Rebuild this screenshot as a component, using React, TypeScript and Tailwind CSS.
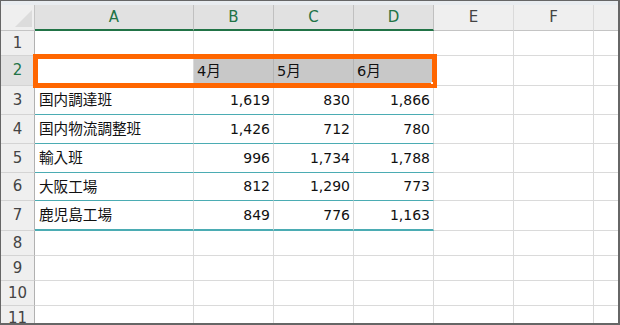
import React from "react";

type Col = { key: string; w: string; data: boolean };

const cols: Col[] = [
  { key: "A", w: "w-[159px]", data: true },
  { key: "B", w: "w-[80px]", data: true },
  { key: "C", w: "w-[80px]", data: true },
  { key: "D", w: "w-[80px]", data: true },
  { key: "E", w: "w-[80px]", data: false },
  { key: "F", w: "w-[80px]", data: false },
  { key: "", w: "w-[24px]", data: false },
];

type Row = { n: number; h: string; cells?: string[] };

const rows: Row[] = [
  { n: 1, h: "h-[25px]" },
  { n: 2, h: "h-[30px]", cells: ["", "4月", "5月", "6月"] },
  { n: 3, h: "h-[29px]", cells: ["国内調達班", "1,619", "830", "1,866"] },
  { n: 4, h: "h-[29px]", cells: ["国内物流調整班", "1,426", "712", "780"] },
  { n: 5, h: "h-[29px]", cells: ["輸入班", "996", "1,734", "1,788"] },
  { n: 6, h: "h-[28px]", cells: ["大阪工場", "812", "1,290", "773"] },
  { n: 7, h: "h-[30px]", cells: ["鹿児島工場", "849", "776", "1,163"] },
  { n: 8, h: "h-[25px]" },
  { n: 9, h: "h-[25px]" },
  { n: 10, h: "h-[25px]" },
  { n: 11, h: "h-[25px]" },
];

const font = "font-['DejaVu_Sans','Noto_Sans_CJK_JP',sans-serif]";

function cellClass(row: Row, ci: number, col: Col) {
  const isTable = row.n >= 3 && row.n <= 7 && col.data;
  const isHead = row.n === 2 && ci >= 1 && ci <= 3;
  let c = `${col.w} shrink-0 flex items-center overflow-hidden whitespace-nowrap`;
  if (col.key !== "") c += " border-r";
  if (isHead) c += " bg-[#c8c8c8] border-r-[#b4b4b4]";
  else c += " border-r-[#dadada]";
  if (isTable && row.n === 7) c += " border-b-2 border-b-[#4bacb3]";
  else if (isTable) c += " border-b border-b-[#4bacb3]";
  else c += " border-b border-b-[#dadada]";
  if (row.n >= 3 && ci >= 1 && col.data) c += " justify-end pr-[3px] text-[14px]";
  else if (ci === 0) c += " pl-[4px] text-[14.6px]";
  else c += " pl-[3px] text-[14.6px]";
  return c;
}

export default function App() {
  return (
    <div
      className={`relative w-[620px] h-[325px] overflow-hidden bg-white border-t border-l border-r-2 border-b-2 border-[#666666] ${font} text-[#111]`}
    >
      <div className="h-[4px] bg-[#e8ecf0]" />
      {/* column headers */}
      <div className="flex h-[26px]">
        <div className="relative w-[34px] shrink-0 bg-[#efefef] border-r border-r-[#c4c4c4] border-b border-b-[#c4c4c4]">
          <svg className="absolute left-[14px] top-[5px]" width="18" height="18" viewBox="0 0 18 18">
            <polygon points="0,17 17,0 17,17" fill="#dcdcdc" />
          </svg>
        </div>
        {cols.map((col, i) => (
          <div
            key={i}
            className={`${col.w} shrink-0 flex items-center justify-center text-[15px] ${
              col.data
                ? "bg-[#e1e1e1] text-[#217346] border-b-2 border-b-[#217346]"
                : "bg-[#efefef] text-[#444] border-b border-b-[#c4c4c4]"
            } ${col.key !== "" ? "border-r" : ""} ${
              col.data ? "border-r-[#c0c0c0]" : "border-r-[#dadada]"
            }`}
          >
            {col.key}
          </div>
        ))}
      </div>
      {rows.map((row) => (
        <div key={row.n} className={`flex ${row.h}`}>
          <div
            className={`w-[34px] shrink-0 flex items-center justify-center text-[15px] border-r border-r-[#b1b1b1] border-b border-b-[#d4d4d4] ${
              row.n === 2 ? "bg-[#e1e1e1] text-[#217346]" : "bg-[#efefef] text-[#444]"
            }`}
          >
            {row.n}
          </div>
          {cols.map((col, ci) => (
            <div key={ci} className={cellClass(row, ci, col)}>
              {row.cells && col.data ? row.cells[ci] : ""}
            </div>
          ))}
        </div>
      ))}
      {/* selection highlight */}
      <div className="absolute left-[32px] top-[53px] w-[404px] h-[34px] border-[5px] border-[#ff6600] pointer-events-none" />
      <div className="absolute left-[430px] top-[81px] w-[2px] h-[2px] bg-white" />
    </div>
  );
}
